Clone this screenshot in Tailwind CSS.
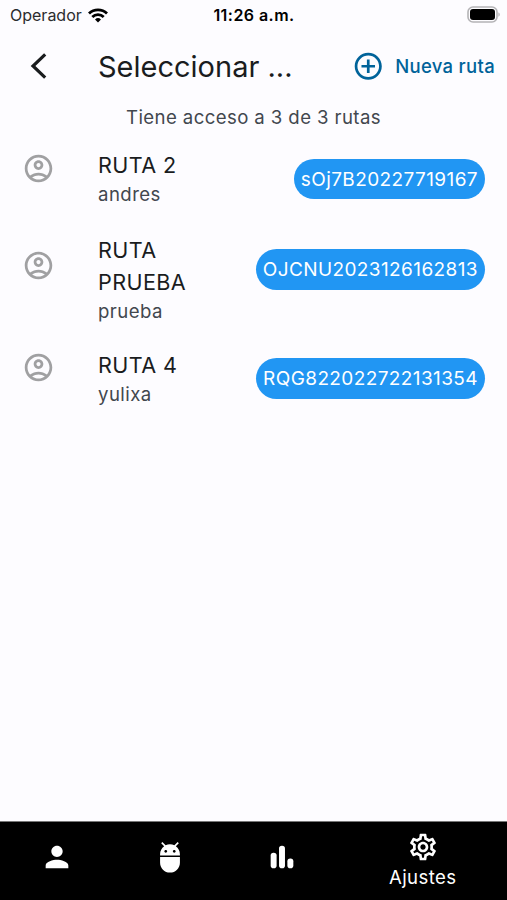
<!DOCTYPE html>
<html lang="es">

<head>
    <meta charset="UTF-8">
    <meta name="viewport" content="width=device-width, initial-scale=1.0">
    <title>Seleccionar ruta</title>
    <script src="https://cdn.jsdelivr.net/npm/@tailwindcss/browser@4"></script>
</head>

<body class="bg-[#fdfcff] text-[#1a1c1e] font-['Inter',sans-serif] h-screen flex flex-col overflow-hidden">

    <!-- Status bar -->
    <div class="h-[30px] shrink-0 grid grid-cols-3 items-center pl-[10px] pr-[7px]">
        <div class="flex items-center gap-[6px]">
            <span class="text-[16px] text-[#2c2c2e]">Operador</span>
            <svg class="w-5 h-[15px]" viewBox="0 0 20 15" fill="none" stroke="#000" stroke-width="2.8">
                <path d="M1 5.6a12.8 12.8 0 0 1 18 0" />
                <path d="M4.3 9a8.1 8.1 0 0 1 11.4 0" />
                <path d="M10 14.6l3-3.2a4.3 4.3 0 0 0-6 0z" fill="#000" stroke="none" />
            </svg>
        </div>
        <span class="text-center text-[16px] font-semibold tracking-[0.45px] text-black whitespace-nowrap pr-[2px]">11:26 a.m.</span>
        <svg class="w-[34px] h-[18px] justify-self-end" viewBox="0 0 34 18">
            <rect x="2" y="1" width="29" height="15" rx="5" fill="#fdfcff" stroke="#b4b3b6" stroke-width="1.6" />
            <rect x="4" y="3" width="25" height="11" rx="3" fill="#000" />
            <path d="M32.4 6.5c1.8.6 1.8 3.6 0 4.2z" fill="#b4b3b6" />
        </svg>
    </div>

    <!-- App bar -->
    <header class="h-[72px] shrink-0 flex items-center pr-[12px]">
        <div class="w-[98px] shrink-0 pl-[30px]">
            <svg class="w-[18px] h-[28px]" viewBox="0 0 18 28" fill="none" stroke="#1a1c1e" stroke-width="3.2">
                <path d="M15.2 2.3L3 14l12.2 11.7" />
            </svg>
        </div>
        <h1 class="pt-px text-[29px] whitespace-nowrap">Seleccionar ...</h1>
        <div class="ml-auto flex items-center gap-[11px] text-[#00639a]">
            <svg class="w-[32.5px] h-[32.5px]" viewBox="0 0 24 24" fill="currentColor">
                <path d="M13 7h-2v4H7v2h4v4h2v-4h4v-2h-4V7zm-1-5C6.48 2 2 6.48 2 12s4.48 10 10 10 10-4.48 10-10S17.52 2 12 2zm0 18c-4.41 0-8-3.59-8-8s3.59-8 8-8 8 3.59 8 8-3.59 8-8 8z" />
            </svg>
            <span class="pt-px text-[18.5px] tracking-[0.3px] font-medium whitespace-nowrap">Nueva ruta</span>
        </div>
    </header>

    <!-- Routes -->
    <main class="grow">
        <p class="h-[30px] leading-[31px] text-center text-[18.6px] tracking-[0.4px] text-[#42474e]">Tiene acceso a 3 de 3 rutas</p>

        <ul class="pl-[22px] pr-[22px] pt-[17px]">
            <li class="h-[85px] flex items-start">
                <svg class="mt-[3px] w-[33px] h-[33px] mr-[43px] shrink-0 text-[#a0a0a2]" viewBox="0 0 24 24" fill="currentColor">
                    <path d="M12 2C6.48 2 2 6.48 2 12s4.48 10 10 10 10-4.48 10-10S17.52 2 12 2zM7.35 18.5C8.66 17.56 10.26 17 12 17s3.34.56 4.65 1.5c-1.31.94-2.91 1.5-4.65 1.5s-3.34-.56-4.65-1.5zm10.79-1.38C16.45 15.8 14.32 15 12 15s-4.45.8-6.14 2.12C4.7 15.73 4 13.95 4 12c0-4.42 3.58-8 8-8s8 3.58 8 8c0 1.95-.7 3.73-1.86 5.12zM12 6c-1.93 0-3.5 1.57-3.5 3.5S10.07 13 12 13s3.5-1.57 3.5-3.5S13.93 6 12 6zm0 5c-.83 0-1.5-.67-1.5-1.5S11.17 8 12 8s1.5.67 1.5 1.5S12.83 11 12 11z" />
                </svg>
                <div class="w-[120px]">
                    <div class="text-[21.6px] leading-8 tracking-[0.4px]">RUTA 2</div>
                    <div class="text-[18.6px] leading-[26px] tracking-[0.45px] text-[#42474e]">andres</div>
                </div>
                <span class="ml-auto mt-[9.5px] h-[40.5px] pt-[2px] px-[7px] flex items-center rounded-full bg-[#2196f3] text-white text-[19px] tracking-[0.4px]">sOj7B20227719167</span>
            </li>
            <li class="h-[115px] flex items-start">
                <svg class="mt-[15px] w-[33px] h-[33px] mr-[43px] shrink-0 text-[#a0a0a2]" viewBox="0 0 24 24" fill="currentColor">
                    <path d="M12 2C6.48 2 2 6.48 2 12s4.48 10 10 10 10-4.48 10-10S17.52 2 12 2zM7.35 18.5C8.66 17.56 10.26 17 12 17s3.34.56 4.65 1.5c-1.31.94-2.91 1.5-4.65 1.5s-3.34-.56-4.65-1.5zm10.79-1.38C16.45 15.8 14.32 15 12 15s-4.45.8-6.14 2.12C4.7 15.73 4 13.95 4 12c0-4.42 3.58-8 8-8s8 3.58 8 8c0 1.95-.7 3.73-1.86 5.12zM12 6c-1.93 0-3.5 1.57-3.5 3.5S10.07 13 12 13s3.5-1.57 3.5-3.5S13.93 6 12 6zm0 5c-.83 0-1.5-.67-1.5-1.5S11.17 8 12 8s1.5.67 1.5 1.5S12.83 11 12 11z" />
                </svg>
                <div class="w-[120px]">
                    <div class="text-[21.6px] leading-8 tracking-[0.4px]">RUTA PRUEBA</div>
                    <div class="text-[18.6px] leading-[26px] tracking-[0.45px] text-[#42474e]">prueba</div>
                </div>
                <span class="ml-auto mt-[15px] h-[40.5px] pt-[2px] px-[7px] flex items-center rounded-full bg-[#2196f3] text-white text-[19px] tracking-[0.4px]">OJCNU2023126162813</span>
            </li>
            <li class="flex items-start">
                <svg class="mt-[2px] w-[33px] h-[33px] mr-[43px] shrink-0 text-[#a0a0a2]" viewBox="0 0 24 24" fill="currentColor">
                    <path d="M12 2C6.48 2 2 6.48 2 12s4.48 10 10 10 10-4.48 10-10S17.52 2 12 2zM7.35 18.5C8.66 17.56 10.26 17 12 17s3.34.56 4.65 1.5c-1.31.94-2.91 1.5-4.65 1.5s-3.34-.56-4.65-1.5zm10.79-1.38C16.45 15.8 14.32 15 12 15s-4.45.8-6.14 2.12C4.7 15.73 4 13.95 4 12c0-4.42 3.58-8 8-8s8 3.58 8 8c0 1.95-.7 3.73-1.86 5.12zM12 6c-1.93 0-3.5 1.57-3.5 3.5S10.07 13 12 13s3.5-1.57 3.5-3.5S13.93 6 12 6zm0 5c-.83 0-1.5-.67-1.5-1.5S11.17 8 12 8s1.5.67 1.5 1.5S12.83 11 12 11z" />
                </svg>
                <div class="w-[120px]">
                    <div class="text-[21.6px] leading-8 tracking-[0.4px]">RUTA 4</div>
                    <div class="text-[18.6px] leading-[26px] tracking-[0.45px] text-[#42474e]">yulixa</div>
                </div>
                <span class="ml-auto mt-[9px] h-[40.5px] pt-[2px] px-[7px] flex items-center rounded-full bg-[#2196f3] text-white text-[19px] tracking-[0.4px]">RQG822022722131354</span>
            </li>
        </ul>
    </main>

    <!-- Bottom navigation -->
    <nav class="h-[79px] shrink-0 bg-black border-t border-[#777] text-white grid grid-cols-[1fr_1fr_1fr_1.5fr] pl-px">
        <div class="flex justify-center pt-[18px]">
            <svg class="w-[34px] h-[34px]" viewBox="0 0 24 24" fill="currentColor">
                <path d="M12 12c2.21 0 4-1.79 4-4s-1.79-4-4-4-4 1.79-4 4 1.79 4 4 4zm0 2c-2.67 0-8 1.34-8 4v2h16v-2c0-2.66-5.33-4-8-4z" />
            </svg>
        </div>
        <div class="flex justify-center pt-[18px]">
            <svg class="w-[34px] h-[34px]" viewBox="0 0 24 24" fill="currentColor">
                <path d="M5 16c0 3.87 3.13 7 7 7s7-3.13 7-7v-4H5v4zM16.12 4.37l2.1-2.1-.82-.83-2.3 2.31C14.16 3.28 13.12 3 12 3s-2.14.28-3.09.75L6.6 1.44l-.82.83 2.1 2.1C6.14 5.64 5 7.68 5 10v1h14v-1c0-2.32-1.14-4.36-2.88-5.63zM9 9c-.55 0-1-.45-1-1s.45-1 1-1 1 .45 1 1-.45 1-1 1zm6 0c-.55 0-1-.45-1-1s.45-1 1-1 1 .45 1 1-.45 1-1 1z" />
            </svg>
        </div>
        <div class="flex justify-center pt-[18px]">
            <svg class="w-[34px] h-[34px]" viewBox="0 0 24 24" fill="currentColor">
                <rect x="4" y="9" width="4.2" height="11" rx="2" />
                <rect x="9.9" y="4" width="4.2" height="16" rx="2" />
                <rect x="15.8" y="13" width="4.2" height="7" rx="2" />
            </svg>
        </div>
        <div class="flex flex-col items-center pt-[9px]">
            <svg class="w-[32px] h-[32px]" viewBox="0 0 24 24" fill="currentColor">
                <path d="M19.43 12.98c.04-.32.07-.64.07-.98 0-.34-.03-.66-.07-.98l2.11-1.65c.19-.15.24-.42.12-.64l-2-3.46c-.09-.16-.26-.25-.44-.25-.06 0-.12.01-.17.03l-2.49 1c-.52-.4-1.08-.73-1.69-.98l-.38-2.65C14.46 2.18 14.25 2 14 2h-4c-.25 0-.46.18-.49.42l-.38 2.65c-.61.25-1.17.59-1.69.98l-2.49-1c-.06-.02-.12-.03-.18-.03-.17 0-.34.09-.43.25l-2 3.46c-.13.22-.07.49.12.64l2.11 1.65c-.04.32-.07.65-.07.98 0 .33.03.66.07.98l-2.11 1.65c-.19.15-.24.42-.12.64l2 3.46c.09.16.26.25.44.25.06 0 .12-.01.17-.03l2.49-1c.52.4 1.08.73 1.69.98l.38 2.65c.03.24.24.42.49.42h4c.25 0 .46-.18.49-.42l.38-2.65c.61-.25 1.17-.59 1.69-.98l2.49 1c.06.02.12.03.18.03.17 0 .34-.09.43-.25l2-3.46c.12-.22.07-.49-.12-.64l-2.11-1.65zm-1.98-1.71c.04.31.05.52.05.73 0 .21-.02.43-.05.73l-.14 1.13.89.7 1.08.84-.7 1.21-1.27-.51-1.04-.42-.9.68c-.43.32-.84.56-1.25.73l-1.06.43-.16 1.13-.2 1.35h-1.4l-.19-1.35-.16-1.13-1.06-.43c-.43-.18-.83-.41-1.23-.71l-.91-.7-1.06.43-1.27.51-.7-1.21 1.08-.84.89-.7-.14-1.13c-.03-.31-.05-.54-.05-.74s.02-.43.05-.73l.14-1.13-.89-.7-1.08-.84.7-1.21 1.27.51 1.04.42.9-.68c.43-.32.84-.56 1.25-.73l1.06-.43.16-1.13.2-1.35h1.39l.19 1.35.16 1.13 1.06.43c.43.18.83.41 1.23.71l.91.7 1.06-.43 1.27-.51.7 1.21-1.07.85-.89.7.14 1.13zM12 8c-2.21 0-4 1.79-4 4s1.79 4 4 4 4-1.79 4-4-1.79-4-4-4zm0 6c-1.1 0-2-.9-2-2s.9-2 2-2 2 .9 2 2-.9 2-2 2z" />
            </svg>
            <span class="text-[18.6px] leading-[29px] tracking-[0.4px]">Ajustes</span>
        </div>
    </nav>

</body>

</html>
